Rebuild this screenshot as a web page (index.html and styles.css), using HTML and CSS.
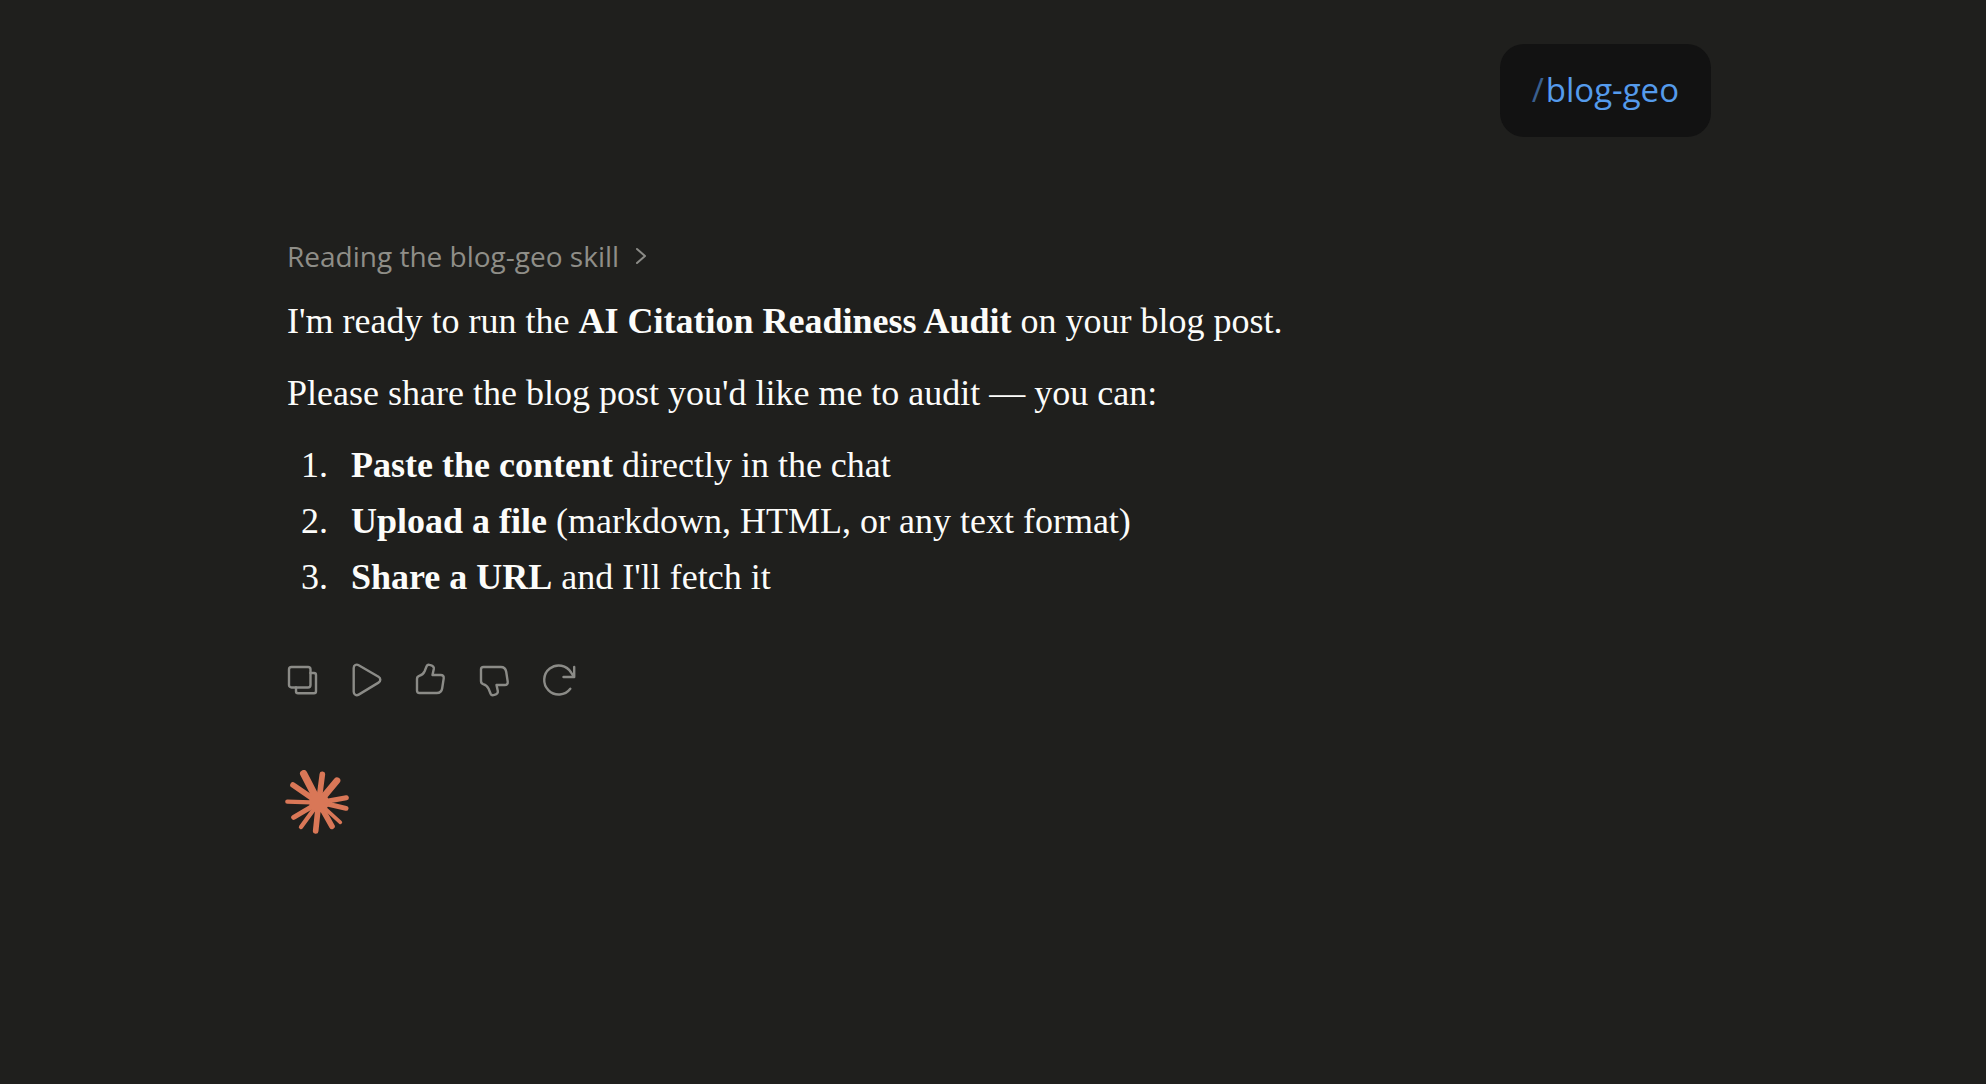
FILE: index.html
```html
<!DOCTYPE html>
<html lang="en">
<head>
    <meta charset="UTF-8">
    <meta name="viewport" content="width=device-width, initial-scale=1.0">
    <title>Blog GEO chat</title>
    <link rel="stylesheet" href="styles.css">
</head>
<body>
    <main class="chat">

        <!-- User message -->
        <div class="user-message"><span class="slash">/</span>blog-geo</div>

        <!-- Assistant reply -->
        <article class="reply">
            <button class="skill-toggle" type="button">
                Reading the blog-geo skill
                <svg class="chevron" viewBox="0 0 12 18"><path d="M2 2l8 7-8 7"/></svg>
            </button>

            <p>I'm ready to run the <strong>AI Citation Readiness Audit</strong> on your blog post.</p>
            <p>Please share the blog post you'd like me to audit — you can:</p>
            <ol>
                <li><strong>Paste the content</strong> directly in the chat</li>
                <li><strong>Upload a file</strong> (markdown, HTML, or any text format)</li>
                <li><strong>Share a URL</strong> and I'll fetch it</li>
            </ol>
        </article>

        <div class="actions">
            <button class="action" type="button" aria-label="Copy">
                <svg viewBox="0 0 32 32"><rect x="2" y="3" width="21.5" height="20.5" rx="2.5"/><path d="M23.5 9H27a2 2 0 0 1 2 2v16.3a2 2 0 0 1-2 2H11a2 2 0 0 1-2-2v-3.8"/></svg>
            </button>
            <button class="action" type="button" aria-label="Play">
                <svg viewBox="0 0 32 32"><path d="M2.7 4v23.8c0 2.8 2.6 4.200 5 2.800l19.800-12c2.400-1.500 2.400-4.300 0-5.800L7.700 1.200C5.300-.2 2.700 1.200 2.700 4z"/></svg>
            </button>
            <button class="action" type="button" aria-label="Good response">
                <svg viewBox="0 0 32 32"><path d="M2 15c0-1.700.8-2.600 2.200-3.100C7.500 11 8.600 9.500 9.600 7.200l2-5C12.200.8 13.300.5 14.500.8c3.300.7 4.700 2 4.300 4.200L17.500 11h8.200c2.200 0 3.300 1.300 3 3.400l-1.500 9.800C26.700 27.300 25 29 21.800 29H4.500C3 29 2 28 2 26.500z"/></svg>
            </button>
            <button class="action" type="button" aria-label="Bad response">
                <svg viewBox="0 0 32 32"><path transform="matrix(1 0 0 -1 0 32)" d="M2 15c0-1.700.8-2.600 2.200-3.100C7.500 11 8.600 9.500 9.600 7.200l2-5C12.200.8 13.300.5 14.500.8c3.300.7 4.700 2 4.300 4.200L17.500 11h8.200c2.200 0 3.300 1.300 3 3.400l-1.500 9.800C26.700 27.300 25 29 21.800 29H4.500C3 29 2 28 2 26.500z"/></svg>
            </button>
            <button class="action" type="button" aria-label="Retry">
                <svg viewBox="0 0 32 32"><path d="M27.300 24.700A14.500 14.500 0 1 1 28.200 8.600L31 12.800M31.200 3v10H20.500"/></svg>
            </button>
        </div>

        <svg class="spark" viewBox="30 30 192 192">
            <path stroke-width="22" d="M131 128L86 41"/>
            <path stroke-width="20" d="M131 128L186 62"/>
            <path stroke-width="17" d="M131 128L142 43M131 128L171 199M131 128L122 213M131 128L54 75"/>
            <path stroke-width="15" d="M131 128L214 113M131 126L213 145M131 128L56 172"/>
            <path stroke-width="13" d="M131 128L37 125M131 128L78 201"/>
            <path stroke-width="11" d="M131 128L196 187"/>
            <circle cx="132" cy="127" r="30"/>
        </svg>

    </main>
</body>
</html>
```

FILE: styles.css
```css
body {
    margin: 0;
    background: #1f1f1d;
    color: #fcfcfa;
    font-family: "Liberation Serif", "Times New Roman", serif;
    font-size: 36px;
    line-height: 48px;
}
.chat {
    display: flex;
    flex-direction: column;
    align-items: flex-start;
    padding: 44px 275px 44px 287px;
}
.user-message {
    align-self: flex-end;
    padding: 22px 32px 23px;
    border-radius: 24px;
    background: #121212;
    color: #559bec;
    font-family: "Open Sans", sans-serif;
    font-size: 33px;
}
.slash {
    padding-right: 2px;
    color: #3a5f8e;
}
.reply {
    margin-top: 96px;
}
.skill-toggle {
    display: flex;
    align-items: center;
    gap: 16px;
    padding: 0;
    border: 0;
    background: none;
    color: #8f8e88;
    font-family: "Open Sans", sans-serif;
    font-size: 28px;
    line-height: 46px;
    cursor: pointer;
}
.chevron {
    width: 12px;
    height: 18px;
}
svg {
    fill: none;
    stroke: #8b8b87;
    stroke-width: 2;
    stroke-linecap: round;
    stroke-linejoin: round;
}
.reply p {
    margin: 0 0 24px;
}
.skill-toggle + p {
    margin-top: 18px;
}
.reply ol {
    display: flex;
    flex-direction: column;
    gap: 8px;
    margin: 0;
    padding-left: 50px;
}
.reply li {
    padding-left: 14px;
}
.actions {
    display: flex;
    gap: 32px;
    margin-top: 63px;
}
.action {
    display: flex;
    padding: 0;
    border: 0;
    background: none;
    cursor: pointer;
}
.action svg {
    width: 32px;
    height: 32px;
    overflow: visible;
    stroke-width: 2.4;
}
.spark {
    width: 64px;
    height: 64px;
    margin: 74px 0 0 -2px;
    stroke: #d97757;
}
.spark circle {
    fill: #d97757;
    stroke: none;
}
```
